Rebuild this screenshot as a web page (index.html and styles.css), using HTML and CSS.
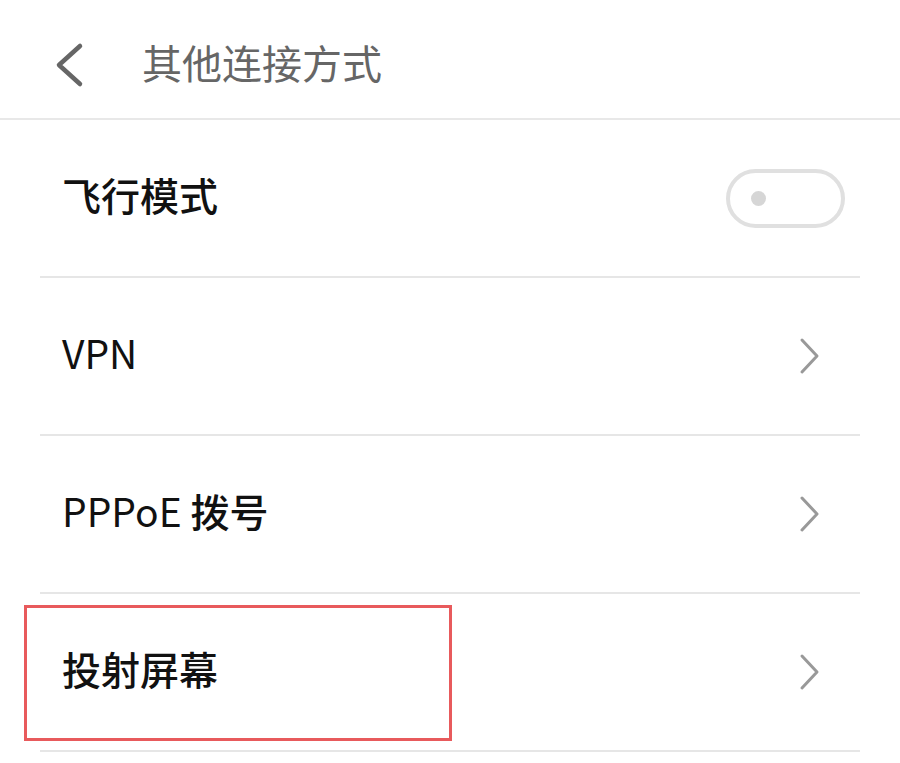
FILE: index.html
```html
<!DOCTYPE html>
<html lang="zh">
<head>
  <meta charset="UTF-8">
  <meta name="viewport" content="width=device-width, initial-scale=1">
  <title>其他连接方式</title>
  <link rel="stylesheet" href="styles.css">
</head>
<body>

<div class="header">
  <svg class="back" width="40" height="48" viewBox="0 0 40 48">
    <polyline points="28,6 7,25 28,44" fill="none" stroke="#666" stroke-width="4.5" stroke-linecap="round" stroke-linejoin="round"/>
  </svg>
  <h1>其他连接方式</h1>
</div>

<div class="list">
  <div class="row">
    <span class="label">飞行模式</span>
    <div class="toggle"><div class="dot"></div></div>
  </div>
  <div class="row">
    <span class="label"><span class="latin">VPN</span></span>
    <svg class="arrow" width="24" height="40" viewBox="0 0 24 40">
      <polyline points="4,4 19,20 4,36" fill="none" stroke="#999" stroke-width="3" stroke-linecap="round" stroke-linejoin="round"/>
    </svg>
  </div>
  <div class="row">
    <span class="label"><span class="latin">PPPoE</span> 拨号</span>
    <svg class="arrow" width="24" height="40" viewBox="0 0 24 40">
      <polyline points="4,4 19,20 4,36" fill="none" stroke="#999" stroke-width="3" stroke-linecap="round" stroke-linejoin="round"/>
    </svg>
  </div>
  <div class="row">
    <span class="label">投射屏幕</span>
    <svg class="arrow" width="24" height="40" viewBox="0 0 24 40">
      <polyline points="4,4 19,20 4,36" fill="none" stroke="#999" stroke-width="3" stroke-linecap="round" stroke-linejoin="round"/>
    </svg>
    <div class="mark"></div>
  </div>
</div>

</body>
</html>
```

FILE: styles.css
```css
body {
  margin: 0;
  background: #fff;
  font-family: "Noto Sans CJK SC", "Noto Sans", sans-serif;
  color: #111;
}
.header {
  height: 118px;
  display: flex;
  align-items: center;
  border-bottom: 2px solid #e8e8e8;
  padding-left: 52px;
}
.back {
  margin-right: 50px;
  margin-top: 10px;
}
.header h1 {
  margin: 0;
  font-size: 40px;
  font-weight: 400;
  color: #666;
  margin-top: 6px;
}
.list {
  margin: 0 40px;
}
.row {
  position: relative;
  height: 156px;
  display: flex;
  align-items: center;
  justify-content: space-between;
  border-bottom: 2px solid #e6e6e6;
  padding-left: 22px;
}
.label {
  font-size: 39px;
  font-weight: 500;
  color: #111;
  margin-top: -9px;
}
.latin {
  font-weight: 400;
}
.arrow {
  margin-right: 38px;
}
.toggle {
  width: 111px;
  height: 51px;
  border: 4px solid #e0e0e0;
  border-radius: 30px;
  margin-right: 15px;
  display: flex;
  align-items: center;
}
.dot {
  width: 15px;
  height: 15px;
  border-radius: 50%;
  background: #d6d6d6;
  margin-left: 21px;
}
.mark {
  position: absolute;
  left: -16px;
  top: 11px;
  width: 422px;
  height: 130px;
  border: 3px solid #e85a5c;
}
```
